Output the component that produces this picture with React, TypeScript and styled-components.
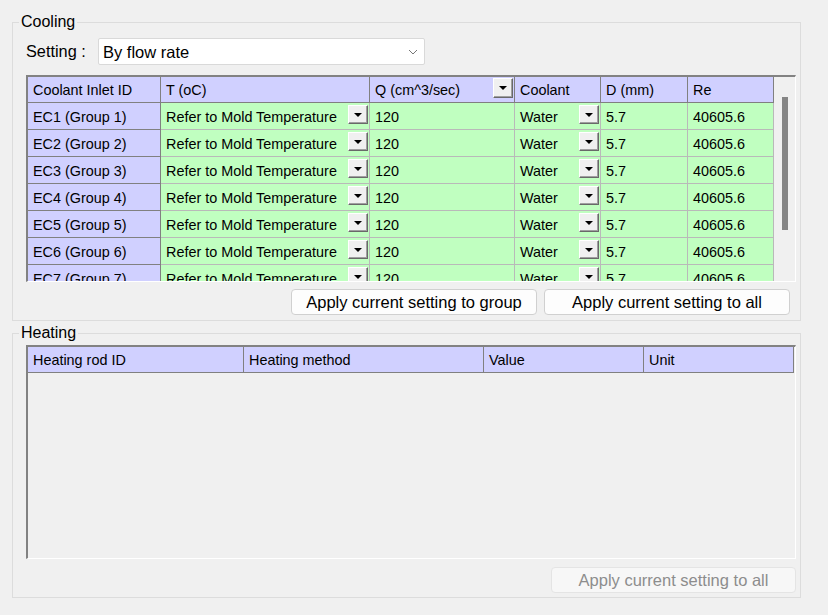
import React from "react";
import styled, { createGlobalStyle } from "styled-components";

const GlobalStyle = createGlobalStyle`
  body {
    margin: 0;
    background: #f0f0f0;
    font-family: "Liberation Sans", Arial, sans-serif;
    color: #000;
  }
`;

const Page = styled.div`
  width: 828px;
  height: 615px;
  padding-top: 13px;
  box-sizing: border-box;
  overflow: hidden;
`;

const Group = styled.fieldset<{ $top: number; $bottom: number }>`
  margin: ${(p) => p.$top}px 0 0 12px;
  width: 789px;
  min-width: 0;
  box-sizing: border-box;
  border: 1px solid #dcdcdc;
  padding: 0 4px ${(p) => p.$bottom}px 13px;
`;

const Legend = styled.legend`
  margin-left: -7px;
  padding: 0 2px;
  font-size: 16px;
  line-height: 18px;
`;

const SettingRow = styled.div`
  display: flex;
  align-items: center;
  margin-top: 7px;
  height: 27px;
`;

const SettingLabel = styled.span`
  width: 72px;
  font-size: 16.3px;
`;

const Select = styled.div`
  width: 327px;
  height: 27px;
  box-sizing: border-box;
  display: flex;
  align-items: center;
  justify-content: space-between;
  padding: 1px 6px 0 4px;
  background: #fff;
  border: 1px solid #d9d9d9;
  border-radius: 2px;
  font-size: 16.5px;
`;

const TableFrame = styled.div<{ $top: number; $height: number }>`
  display: flex;
  width: 770px;
  height: ${(p) => p.$height}px;
  margin-top: ${(p) => p.$top}px;
  box-sizing: border-box;
  border-style: solid;
  border-width: 2px 1px 1px 2px;
  border-color: #828282 #fff #fff #828282;
  background: #f0f0f0;
`;

const Viewport = styled.div<{ $width: number }>`
  width: ${(p) => p.$width}px;
  display: flex;
  flex-direction: column;
  overflow: hidden;
`;

const Row = styled.div<{ $cols: string; $height: number; $shift: number }>`
  display: grid;
  grid-template-columns: ${(p) => p.$cols};
  height: ${(p) => p.$height}px;
  flex-shrink: 0;

  & > div {
    padding-top: ${(p) => p.$shift}px;
  }
`;

const Cell = styled.div<{ $kind: "head" | "data" }>`
  display: flex;
  align-items: center;
  justify-content: space-between;
  box-sizing: border-box;
  padding-left: 5px;
  font-size: 14.4px;
  white-space: nowrap;
  overflow: hidden;
  background: ${(p) => (p.$kind === "head" ? "#d0d0ff" : "#c0ffc0")};
  border-right: 1px solid ${(p) => (p.$kind === "head" ? "#808080" : "#b9b9b9")};
  border-bottom: 1px solid ${(p) => (p.$kind === "head" ? "#808080" : "#b9b9b9")};
`;

const DropButton = styled.div<{ $h: number }>`
  align-self: flex-start;
  margin: 1px 1px 0 0;
  width: 20px;
  height: ${(p) => p.$h}px;
  flex-shrink: 0;
  box-sizing: border-box;
  display: flex;
  align-items: center;
  justify-content: center;
  background: #f0f0f0;
  border: 1px solid;
  border-color: #fff #696969 #696969 #fff;
  box-shadow: inset -1px -1px 0 #a0a0a0;

  &::after {
    content: "";
    border-left: 4px solid transparent;
    border-right: 4px solid transparent;
    border-top: 4px solid #000;
  }
`;

const ScrollTrack = styled.div`
  width: 21px;
  padding-top: 20px;
  box-sizing: border-box;
`;

const Thumb = styled.div`
  width: 6px;
  height: 133px;
  margin-left: 8px;
  background: #858585;
`;

const ButtonRow = styled.div<{ $top: number; $right: number }>`
  display: flex;
  justify-content: flex-end;
  gap: 7px;
  margin-top: ${(p) => p.$top}px;
  padding-right: ${(p) => p.$right}px;
`;

const ActionButton = styled.button`
  width: 246px;
  height: 26px;
  box-sizing: border-box;
  padding: 0;
  font-family: "Liberation Sans", Arial, sans-serif;
  font-size: 16.5px;
  color: #000;
  background: #fdfdfd;
  border: 1px solid #d0d0d0;
  border-radius: 4px;

  &:disabled {
    width: 245px;
    color: #8d8d8d;
    background: #f7f7f7;
    border-color: #e4e4e4;
  }
`;

const Chevron = () => (
  <svg width="10" height="6" viewBox="0 0 10 6">
    <polyline points="1,1 5,5 9,1" fill="none" stroke="#777" strokeWidth="1" />
  </svg>
);

const coolCols = "133px 209px 145px 86px 87px 86px";
const heatCols = "216px 240px 160px 150px";

const coolRows = [1, 2, 3, 4, 5, 6, 7].map((n) => ({
  id: `EC${n} (Group ${n})`,
  t: "Refer to Mold Temperature",
  q: "120",
  coolant: "Water",
  d: "5.7",
  re: "40605.6",
}));

const App: React.FC = () => {
  return (
    <Page>
      <GlobalStyle />
      <Group $top={0} $bottom={5}>
        <Legend>Cooling</Legend>
        <SettingRow>
          <SettingLabel>Setting :</SettingLabel>
          <Select>
            <span>By flow rate</span>
            <Chevron />
          </Select>
        </SettingRow>
        <TableFrame $top={10} $height={207}>
          <Viewport $width={746}>
            <Row $cols={coolCols} $height={26} $shift={0}>
              <Cell $kind="head">Coolant Inlet ID</Cell>
              <Cell $kind="head">T (oC)</Cell>
              <Cell $kind="head">
                Q (cm^3/sec)
                <DropButton $h={20} />
              </Cell>
              <Cell $kind="head">Coolant</Cell>
              <Cell $kind="head">D (mm)</Cell>
              <Cell $kind="head">Re</Cell>
            </Row>
            {coolRows.map((r) => (
              <Row key={r.id} $cols={coolCols} $height={27} $shift={1}>
                <Cell $kind="head">{r.id}</Cell>
                <Cell $kind="data">
                  {r.t}
                  <DropButton $h={19} />
                </Cell>
                <Cell $kind="data">{r.q}</Cell>
                <Cell $kind="data">
                  {r.coolant}
                  <DropButton $h={19} />
                </Cell>
                <Cell $kind="data">{r.d}</Cell>
                <Cell $kind="data">{r.re}</Cell>
              </Row>
            ))}
          </Viewport>
          <ScrollTrack>
            <Thumb />
          </ScrollTrack>
        </TableFrame>
        <ButtonRow $top={7} $right={6}>
          <ActionButton>Apply current setting to group</ActionButton>
          <ActionButton>Apply current setting to all</ActionButton>
        </ButtonRow>
      </Group>

      <Group $top={3} $bottom={4}>
        <Legend>Heating</Legend>
        <TableFrame $top={3} $height={214}>
          <Viewport $width={766}>
            <Row $cols={heatCols} $height={26} $shift={0}>
              <Cell $kind="head">Heating rod ID</Cell>
              <Cell $kind="head">Heating method</Cell>
              <Cell $kind="head">Value</Cell>
              <Cell $kind="head">Unit</Cell>
            </Row>
          </Viewport>
        </TableFrame>
        <ButtonRow $top={8} $right={0}>
          <ActionButton disabled>Apply current setting to all</ActionButton>
        </ButtonRow>
      </Group>
    </Page>
  );
};

export default App;
